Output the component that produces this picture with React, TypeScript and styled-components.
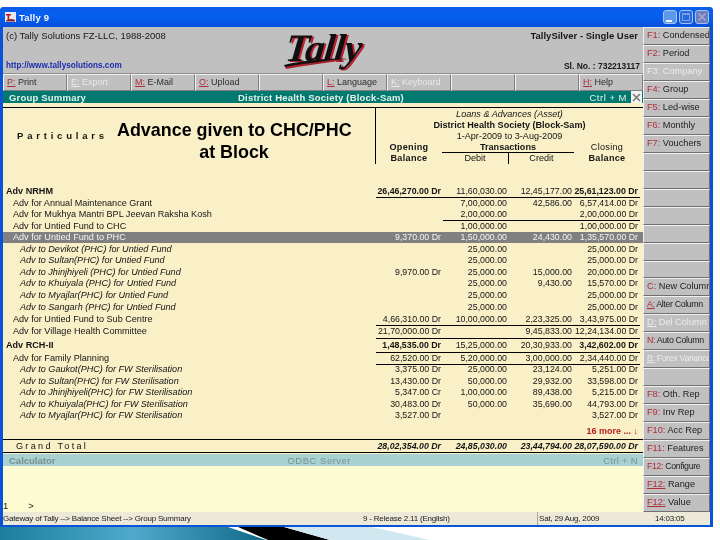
import styled, { createGlobalStyle } from 'styled-components'

const GlobalStyle = createGlobalStyle`
    html, body {
        margin: 0;
        padding: 0;
        background: #fff;
    }
    body {
        font-family: "Liberation Sans", Arial, sans-serif;
        width: 720px;
        height: 540px;
        overflow: hidden;
    }
`

const menuTabs = [
    { k: 'P', label: 'Print' },
    { k: 'E', label: 'Export', off: true },
    { k: 'M', label: 'E-Mail' },
    { k: 'O', label: 'Upload' },
    {},
    { k: 'L', label: 'Language' },
    { k: 'K', label: 'Keyboard', off: true },
    {},
    {},
    { k: 'H', label: 'Help' },
]

const sideKeys: { k?: string; label?: string; off?: boolean; line?: boolean; tight?: boolean }[] = [
    { k: 'F1', label: 'Condensed' },
    { k: 'F2', label: 'Period' },
    { k: 'F3', label: 'Company', off: true },
    { k: 'F4', label: 'Group' },
    { k: 'F5', label: 'Led-wise' },
    { k: 'F6', label: 'Monthly' },
    { k: 'F7', label: 'Vouchers' },
    {}, {}, {}, {}, {}, {}, {},
    { k: 'C', label: 'New Column' },
    { k: 'A', label: 'Alter Column', line: true, tight: true },
    { k: 'D', label: 'Del Column', off: true, line: true },
    { k: 'N', label: 'Auto Column', tight: true },
    { k: 'B', label: 'Forex Variance', off: true, line: true, tight: true },
    {},
    { k: 'F8', label: 'Oth. Rep' },
    { k: 'F9', label: 'Inv Rep' },
    { k: 'F10', label: 'Acc Rep' },
    { k: 'F11', label: 'Features' },
    { k: 'F12', label: 'Configure', tight: true },
    { k: 'F12', label: 'Range', line: true },
    { k: 'F12', label: 'Value', line: true },
]

type RowData = {
    name: string
    level: 0 | 1 | 2
    h: number
    vals: [string, string, string, string]
    rule?: boolean
    ruleShort?: boolean
    strong?: boolean
    active?: boolean
}

const rows: RowData[] = [
    { name: 'Adv NRHM', level: 0, h: 12, strong: true, vals: ['26,46,270.00 Dr', '11,60,030.00', '12,45,177.00', '25,61,123.00 Dr'] },
    { name: 'Adv for Annual Maintenance Grant', level: 1, h: 12, rule: true, vals: ['', '7,00,000.00', '42,586.00', '6,57,414.00 Dr'] },
    { name: 'Adv for Mukhya Mantri BPL Jeevan Raksha Kosh', level: 1, h: 11, vals: ['', '2,00,000.00', '', '2,00,000.00 Dr'] },
    { name: 'Adv for Untied Fund to CHC', level: 1, h: 12, ruleShort: true, vals: ['', '1,00,000.00', '', '1,00,000.00 Dr'] },
    { name: 'Adv for Untied Fund to PHC', level: 1, h: 11, active: true, vals: ['9,370.00 Dr', '1,50,000.00', '24,430.00', '1,35,570.00 Dr'] },
    { name: 'Adv to Devikot (PHC) for Untied Fund', level: 2, h: 12, vals: ['', '25,000.00', '', '25,000.00 Dr'] },
    { name: 'Adv to Sultan(PHC) for Untied Fund', level: 2, h: 11, vals: ['', '25,000.00', '', '25,000.00 Dr'] },
    { name: 'Adv to Jhinjhiyeli (PHC) for Untied Fund', level: 2, h: 12, vals: ['9,970.00 Dr', '25,000.00', '15,000.00', '20,000.00 Dr'] },
    { name: 'Adv to Khuiyala (PHC) for Untied Fund', level: 2, h: 11, vals: ['', '25,000.00', '9,430.00', '15,570.00 Dr'] },
    { name: 'Adv to Myajlar(PHC) for Untied Fund', level: 2, h: 12, vals: ['', '25,000.00', '', '25,000.00 Dr'] },
    { name: 'Adv to Sangarh (PHC) for Untied Fund', level: 2, h: 12, vals: ['', '25,000.00', '', '25,000.00 Dr'] },
    { name: 'Adv for Untied Fund to Sub Centre', level: 1, h: 12, vals: ['4,66,310.00 Dr', '10,00,000.00', '2,23,325.00', '3,43,975.00 Dr'] },
    { name: 'Adv for Village Health Committee', level: 1, h: 13, rule: true, vals: ['21,70,000.00 Dr', '', '9,45,833.00', '12,24,134.00 Dr'] },
    { name: 'Adv RCH-II', level: 0, h: 14, strong: true, rule: true, vals: ['1,48,535.00 Dr', '15,25,000.00', '20,30,933.00', '3,42,602.00 Dr'] },
    { name: 'Adv for Family Planning', level: 1, h: 12, rule: true, vals: ['62,520.00 Dr', '5,20,000.00', '3,00,000.00', '2,34,440.00 Dr'] },
    { name: 'Adv to Gaukot(PHC) for FW Sterilisation', level: 2, h: 11, rule: true, vals: ['3,375.00 Dr', '25,000.00', '23,124.00', '5,251.00 Dr'] },
    { name: 'Adv to Sultan(PHC) for FW Sterilisation', level: 2, h: 12, vals: ['13,430.00 Dr', '50,000.00', '29,932.00', '33,598.00 Dr'] },
    { name: 'Adv to Jhinjhiyeli(PHC) for FW Sterilisation', level: 2, h: 11, vals: ['5,347.00 Cr', '1,00,000.00', '89,438.00', '5,215.00 Dr'] },
    { name: 'Adv to Khuiyala(PHC) for FW Sterilisation', level: 2, h: 12, vals: ['30,483.00 Dr', '50,000.00', '35,690.00', '44,793.00 Dr'] },
    { name: 'Adv to Myajlar(PHC) for FW Sterilisation', level: 2, h: 11, vals: ['3,527.00 Dr', '', '', '3,527.00 Dr'] },
]

export default function App() {
    return (
        <>
            <GlobalStyle />
            <Page>
                <Window>
                    <TitleBar>
                        <TitleName>
                            <svg width="11" height="10" viewBox="0 0 11 10">
                                <rect width="11" height="10" fill="#e8e8f0" />
                                <path d="M1 2h5v1.5H4.2V8H2.6V3.5H1z" fill="#c01818" />
                                <path d="M1 8.5 C4 7 7 6.5 10 8 L10 9.5 L1 9.5z" fill="#802030" />
                            </svg>
                            Tally 9
                        </TitleName>
                        <WinButtons>
                            <WinButton $kind="min" />
                            <WinButton $kind="max" />
                            <WinButton $kind="close">
                                <svg width="10" height="10" viewBox="0 0 10 10">
                                    <path d="M1.5 1.5l7 7M8.5 1.5l-7 7" stroke="#a8a8c8" strokeWidth="1.6" />
                                </svg>
                            </WinButton>
                        </WinButtons>
                    </TitleBar>

                    <Body>
                        <Main>
                            <Masthead>
                                <MastCol>
                                    <MastText>(c) Tally Solutions FZ-LLC, 1988-2008</MastText>
                                    <SiteLink>http://www.tallysolutions.com</SiteLink>
                                </MastCol>
                                <Logo>
                                    <LogoWord>Tally</LogoWord>
                                    <LogoSwoosh width="66" height="12" viewBox="0 0 66 12">
                                        <path d="M1 9 C20 4 42 3 65 2 C44 6 24 8 2 12z" fill="#b02030" />
                                        <path d="M0 8 C20 3 42 2 64 1 C44 4 24 6 1 10z" fill="#111" />
                                    </LogoSwoosh>
                                </Logo>
                                <MastCol $right>
                                    <MastText $bold>TallySilver - Single User</MastText>
                                    <SerialText>Sl. No. : 732213117</SerialText>
                                </MastCol>
                            </Masthead>

                            <MenuBar>
                                {menuTabs.map((t, i) => (
                                    <MenuTab key={i} $off={t.off}>
                                        {t.k && <><Key $off={t.off} $line>{t.k}:</Key> {t.label}</>}
                                    </MenuTab>
                                ))}
                            </MenuBar>

                            <ReportBar>
                                <span>Group Summary</span>
                                <ReportCentre>District Health Society (Block-Sam)</ReportCentre>
                                <ReportCtrl>Ctrl + M</ReportCtrl>
                                <CloseBox>
                                    <svg width="9" height="9" viewBox="0 0 9 9">
                                        <path d="M1 1l7 7M8 1l-7 7" stroke="#777" strokeWidth="1.6" />
                                    </svg>
                                </CloseBox>
                            </ReportBar>

                            <Report>
                                <HeadBlock>
                                    <HeadName>Particulars</HeadName>
                                    <HeadFigures>
                                        <HeadInfo>
                                            <em>Loans &amp; Advances (Asset)</em>
                                            <strong>District Health Society (Block-Sam)</strong>
                                            <span>1-Apr-2009 to 3-Aug-2009</span>
                                        </HeadInfo>
                                        <HeadCols>
                                            <HeadCol><strong>Opening</strong><strong>Balance</strong></HeadCol>
                                            <TransCol>
                                                <TransTitle>Transactions</TransTitle>
                                                <TransSplit>
                                                    <span>Debit</span>
                                                    <span>Credit</span>
                                                </TransSplit>
                                            </TransCol>
                                            <HeadCol><span>Closing</span><strong>Balance</strong></HeadCol>
                                        </HeadCols>
                                    </HeadFigures>
                                </HeadBlock>

                                <Rows>
                                    {rows.map((r) => (
                                        <Row key={r.name + r.h + r.level} $h={r.h} $active={r.active}>
                                            <RowName $level={r.level} $strong={r.strong}>{r.name}</RowName>
                                            <Figures $rule={r.rule} $short={r.ruleShort}>
                                                {r.vals.map((v, i) => (
                                                    <Figure key={i} $bold={r.strong && (i === 0 || i === 3)}>{v}</Figure>
                                                ))}
                                            </Figures>
                                        </Row>
                                    ))}
                                </Rows>

                                <MoreLine>16 more ... ↓</MoreLine>

                                <TotalRow>
                                    <TotalName>Grand Total</TotalName>
                                    <TotalFigures>
                                        <Figure $bold>28,02,354.00 Dr</Figure>
                                        <Figure $bold>24,85,030.00</Figure>
                                        <Figure $bold>23,44,794.00</Figure>
                                        <Figure $bold>28,07,590.00 Dr</Figure>
                                    </TotalFigures>
                                </TotalRow>

                                <Callout>Advance given to CHC/PHC<br />at Block</Callout>
                            </Report>

                            <CalcBar>
                                <span>Calculator</span>
                                <CalcOdbc>ODBC Server</CalcOdbc>
                                <CalcCtrl>Ctrl + N</CalcCtrl>
                            </CalcBar>
                            <CalcArea>
                                <span>1</span>
                                <span>&gt;</span>
                            </CalcArea>
                        </Main>

                        <SideBar>
                            {sideKeys.map((b, i) => (
                                <SideButton key={i} $off={b.off} $tight={b.tight}>
                                    {b.k && <><Key $off={b.off} $line={b.line}>{b.k}:</Key> {b.label}</>}
                                </SideButton>
                            ))}
                        </SideBar>
                    </Body>

                    <StatusBar>
                        <div>Gateway of Tally --&gt; Balance Sheet --&gt; Group Summary</div>
                        <div>9 - Release 2.11 (English)</div>
                        <StatusDate>Sat, 29 Aug, 2009</StatusDate>
                        <div>14:03:05</div>
                    </StatusBar>
                </Window>

                <SlideEdge width="720" height="13" viewBox="0 0 720 13">
                    <defs>
                        <linearGradient id="edge" x1="0" x2="1" y1="0" y2="0">
                            <stop offset="0" stopColor="#1c7f9c" />
                            <stop offset="0.5" stopColor="#4fa9cc" />
                            <stop offset="1" stopColor="#0f6a88" />
                        </linearGradient>
                    </defs>
                    <polygon points="0,0 228,0 266,13 0,13" fill="url(#edge)" />
                    <polygon points="238,0 284,0 330,13 268,13" fill="#000" />
                    <polygon points="284,0 372,0 430,13 330,13" fill="#d2e8f0" />
                </SlideEdge>
            </Page>
        </>
    )
}

const Page = styled.div`
    width: 720px;
    height: 540px;
    padding-top: 7px;
    box-sizing: border-box;
    display: flex;
    flex-direction: column;
    overflow: hidden;
`

const Window = styled.div`
    width: 713px;
    height: 520px;
    flex: none;
    box-sizing: border-box;
    background: #0a52d8;
    border-radius: 4px 4px 0 0;
    padding: 0 3px 2px 3px;
    display: flex;
    flex-direction: column;
    filter: blur(0.4px);
`

const TitleBar = styled.div`
    height: 20px;
    flex: none;
    margin: 0 -3px;
    padding: 0 3px 0 5px;
    display: flex;
    align-items: center;
    justify-content: space-between;
    background: linear-gradient(#0a5ce8, #0660f0 40%, #0450dc);
    border-radius: 4px 4px 0 0;
`

const TitleName = styled.div`
    display: flex;
    align-items: center;
    gap: 3px;
    color: #f4f4ff;
    font-size: 9.5px;
    font-weight: bold;
    letter-spacing: 0.2px;
`

const WinButtons = styled.div`
    display: flex;
    gap: 2px;
    margin-right: 1px;
`

const WinButton = styled.div<{ $kind: 'min' | 'max' | 'close' }>`
    width: 14px;
    height: 14px;
    box-sizing: border-box;
    border-radius: 3px;
    border: 1px solid #a8c4f0;
    display: flex;
    align-items: center;
    justify-content: center;
    background: ${(p) => (p.$kind === 'close' ? '#6c7cc0' : p.$kind === 'min' ? '#5c98ec' : '#2a68e0')};
    &::after {
        content: '';
        display: ${(p) => (p.$kind === 'close' ? 'none' : 'block')};
        box-sizing: border-box;
        width: ${(p) => (p.$kind === 'min' ? '6px' : '8px')};
        height: ${(p) => (p.$kind === 'min' ? '2px' : '8px')};
        margin-top: ${(p) => (p.$kind === 'min' ? '7px' : '0')};
        margin-right: ${(p) => (p.$kind === 'min' ? '2px' : '0')};
        background: ${(p) => (p.$kind === 'min' ? '#f4f8ff' : 'transparent')};
        border: ${(p) => (p.$kind === 'max' ? '1px solid #7aa0e0' : 'none')};
        border-top-width: 2px;
    }
`

const Body = styled.div`
    flex: 1;
    min-height: 0;
    display: flex;
`

const Main = styled.div`
    width: 640px;
    flex: none;
    display: flex;
    flex-direction: column;
    background: #faf0c8;
`

const Masthead = styled.div`
    height: 46px;
    flex: none;
    display: grid;
    grid-template-columns: 275px 90px 1fr;
    background: #c0c0c0;
    border-bottom: 1px solid #909090;
`

const MastCol = styled.div<{ $right?: boolean }>`
    display: flex;
    flex-direction: column;
    justify-content: space-between;
    padding: ${(p) => (p.$right ? '3px 5px 1px 3px' : '3px')};
    padding-bottom: 1px;
    text-align: ${(p) => (p.$right ? 'right' : 'left')};
`

const MastText = styled.div<{ $bold?: boolean }>`
    font-size: 9.5px;
    line-height: 12px;
    font-weight: ${(p) => (p.$bold ? 'bold' : 'normal')};
    color: #181818;
`

const SerialText = styled.div`
    font-size: 8.5px;
    line-height: 12px;
    font-weight: bold;
    color: #181818;
    margin-right: -2px;
`

const SiteLink = styled.div`
    font-size: 8.2px;
    line-height: 12px;
    font-weight: bold;
    color: #1c2cb0;
`

const Logo = styled.div`
    position: relative;
`

const LogoWord = styled.div`
    font-family: "Liberation Serif", serif;
    font-size: 39px;
    line-height: 38px;
    font-weight: bold;
    font-style: italic;
    letter-spacing: -0.6px;
    color: #101010;
    text-shadow: 2px 1px 0 #b82030;
    padding: 2px 0 0 8px;
    transform: skewX(-6deg);
`

const LogoSwoosh = styled.svg`
    position: absolute;
    left: 6px;
    top: 30px;
`

const MenuBar = styled.div`
    height: 17px;
    flex: none;
    display: grid;
    grid-template-columns: repeat(10, 1fr);
    background: #c0c0c0;
`

const MenuTab = styled.div<{ $off?: boolean }>`
    box-sizing: border-box;
    border: 1px solid;
    border-color: #f0f0f0 #808080 #808080 #f0f0f0;
    padding-left: 3px;
    font-size: 9px;
    line-height: 14px;
    white-space: nowrap;
    overflow: hidden;
    color: ${(p) => (p.$off ? '#e8e8e8' : '#2c2c2c')};
`

const Key = styled.span<{ $off?: boolean; $line?: boolean }>`
    color: ${(p) => (p.$off ? '#ececec' : '#b02c3c')};
    text-decoration: ${(p) => (p.$line ? 'underline' : 'none')};
`

const ReportBar = styled.div`
    height: 12px;
    flex: none;
    display: flex;
    align-items: center;
    padding-left: 6px;
    background: #007a70;
    color: #e8f0e8;
    font-size: 9.5px;
    font-weight: bold;
    letter-spacing: 0.2px;
`

const ReportCentre = styled.span`
    margin-left: 152px;
`

const ReportCtrl = styled.span`
    margin-left: auto;
    margin-right: 4px;
    font-weight: normal;
    letter-spacing: 0.5px;
`

const CloseBox = styled.div`
    width: 11px;
    height: 12px;
    margin-right: 1px;
    background: #f4f4f4;
    display: flex;
    align-items: center;
    justify-content: center;
`

const Report = styled.div`
    position: relative;
    flex: none;
    height: 351px;
    box-sizing: border-box;
    padding-top: 4px;
    color: #141414;
`

const HeadBlock = styled.div`
    height: 56px;
    border-top: 1px solid #000;
    display: grid;
    grid-template-columns: 373px 1fr;
    font-size: 9.1px;
`

const HeadName = styled.div`
    padding: 22px 0 0 14px;
    font-size: 9.5px;
    font-weight: bold;
    letter-spacing: 3.8px;
`

const HeadFigures = styled.div`
    border-left: 1px solid #000;
    display: flex;
    flex-direction: column;
    margin-left: -1px;
`

const HeadInfo = styled.div`
    display: flex;
    flex-direction: column;
    align-items: center;
    line-height: 11px;
    padding-top: 1px;
    em, strong, span {
        white-space: nowrap;
    }
`

const HeadCols = styled.div`
    display: grid;
    grid-template-columns: 66px 132px 1fr;
    text-align: center;
    line-height: 11px;
    margin-right: 3px;
`

const HeadCol = styled.div`
    display: flex;
    flex-direction: column;
    align-items: center;
    letter-spacing: 0.3px;
`

const TransCol = styled.div`
    display: flex;
    flex-direction: column;
`

const TransTitle = styled.strong`
    border-bottom: 1px solid #000;
    line-height: 10px;
`

const TransSplit = styled.div`
    display: grid;
    grid-template-columns: 1fr 1fr;
    height: 11px;
    span + span {
        border-left: 1px solid #000;
    }
`

const Rows = styled.div`
    margin-top: 21px;
`

const Row = styled.div<{ $h: number; $active?: boolean }>`
    height: ${(p) => p.$h}px;
    display: grid;
    grid-template-columns: 373px 1fr;
    font-size: 9.1px;
    line-height: ${(p) => p.$h}px;
    background: ${(p) => (p.$active ? '#808080' : 'transparent')};
    color: ${(p) => (p.$active ? '#f4f4f4' : 'inherit')};
`

const RowName = styled.div<{ $level: number; $strong?: boolean }>`
    padding-left: ${(p) => 3 + p.$level * 7}px;
    font-style: ${(p) => (p.$level === 2 ? 'italic' : 'normal')};
    font-weight: ${(p) => (p.$strong ? 'bold' : 'normal')};
    white-space: nowrap;
`

const Figures = styled.div<{ $rule?: boolean; $short?: boolean }>`
    position: relative;
    display: grid;
    grid-template-columns: 65px 66px 65px 66px;
    margin-right: 3px;
    padding-right: 2px;
    ${(p) => p.$rule && 'box-shadow: inset 0 1px 0 #000;'}
    &::before {
        content: '';
        display: ${(p) => (p.$short ? 'block' : 'none')};
        position: absolute;
        left: 67px;
        right: 0;
        top: 0;
        height: 1px;
        background: #000;
    }
`

const Figure = styled.div<{ $bold?: boolean }>`
    font-size: 8.8px;
    font-weight: ${(p) => (p.$bold ? 'bold' : 'normal')};
    text-align: right;
    white-space: nowrap;
`

const MoreLine = styled.div`
    height: 18px;
    line-height: 21px;
    padding-right: 5px;
    text-align: right;
    font-size: 9px;
    font-weight: bold;
    color: #b02020;
`

const TotalRow = styled.div`
    height: 12px;
    display: grid;
    grid-template-columns: 373px 1fr;
    border-top: 1px solid #000;
    border-bottom: 1px solid #000;
    font-size: 9.1px;
    line-height: 12px;
    font-style: italic;
`

const TotalName = styled.div`
    padding-left: 13px;
    letter-spacing: 2.3px;
    font-style: normal;
`

const TotalFigures = styled.div`
    display: grid;
    grid-template-columns: 65px 66px 65px 66px;
    margin-right: 3px;
    padding-right: 2px;
`

const Callout = styled.div`
    position: absolute;
    left: 114px;
    top: 16px;
    width: 234px;
    text-align: center;
    font-size: 17.9px;
    line-height: 22px;
    font-weight: bold;
    color: #000;
    white-space: nowrap;
`

const CalcBar = styled.div`
    height: 12px;
    flex: none;
    display: flex;
    align-items: center;
    padding-left: 6px;
    background: #a8d2d2;
    color: #7a9090;
    font-size: 9.5px;
    font-weight: bold;
`

const CalcOdbc = styled.span`
    margin-left: 232px;
    font-weight: normal;
    letter-spacing: 0.5px;
`

const CalcCtrl = styled.span`
    margin-left: auto;
    margin-right: 5px;
    font-weight: normal;
    letter-spacing: 0.3px;
`

const CalcArea = styled.div`
    flex: 1;
    display: flex;
    align-items: flex-end;
    gap: 20px;
    background: #fdfbd2;
    font-size: 9.5px;
    line-height: 12px;
    color: #222;
`

const SideBar = styled.div`
    flex: 1;
    display: grid;
    grid-template-rows: repeat(27, 1fr);
    background: #c0c0c0;
`

const SideButton = styled.div<{ $off?: boolean; $tight?: boolean }>`
    box-sizing: border-box;
    border: 1px solid;
    border-color: #f0f0f0 #707070 #707070 #f0f0f0;
    padding-left: 3px;
    font-size: ${(p) => (p.$tight ? '8.8px' : '9.2px')};
    letter-spacing: ${(p) => (p.$tight ? '-0.35px' : '0')};
    line-height: 15px;
    white-space: nowrap;
    overflow: hidden;
    color: ${(p) => (p.$off ? '#ececec' : '#202020')};
`

const StatusBar = styled.div`
    height: 13px;
    flex: none;
    display: grid;
    grid-template-columns: 360px 174px 118px 1fr;
    align-items: center;
    background: #ece9d8;
    font-size: 8px;
    letter-spacing: -0.2px;
    color: #202020;
    white-space: nowrap;
`

const StatusDate = styled.div`
    height: 100%;
    line-height: 13px;
    border-left: 1px solid #a8a898;
    padding-left: 1px;
`

const SlideEdge = styled.svg`
    flex: none;
    display: block;
`
